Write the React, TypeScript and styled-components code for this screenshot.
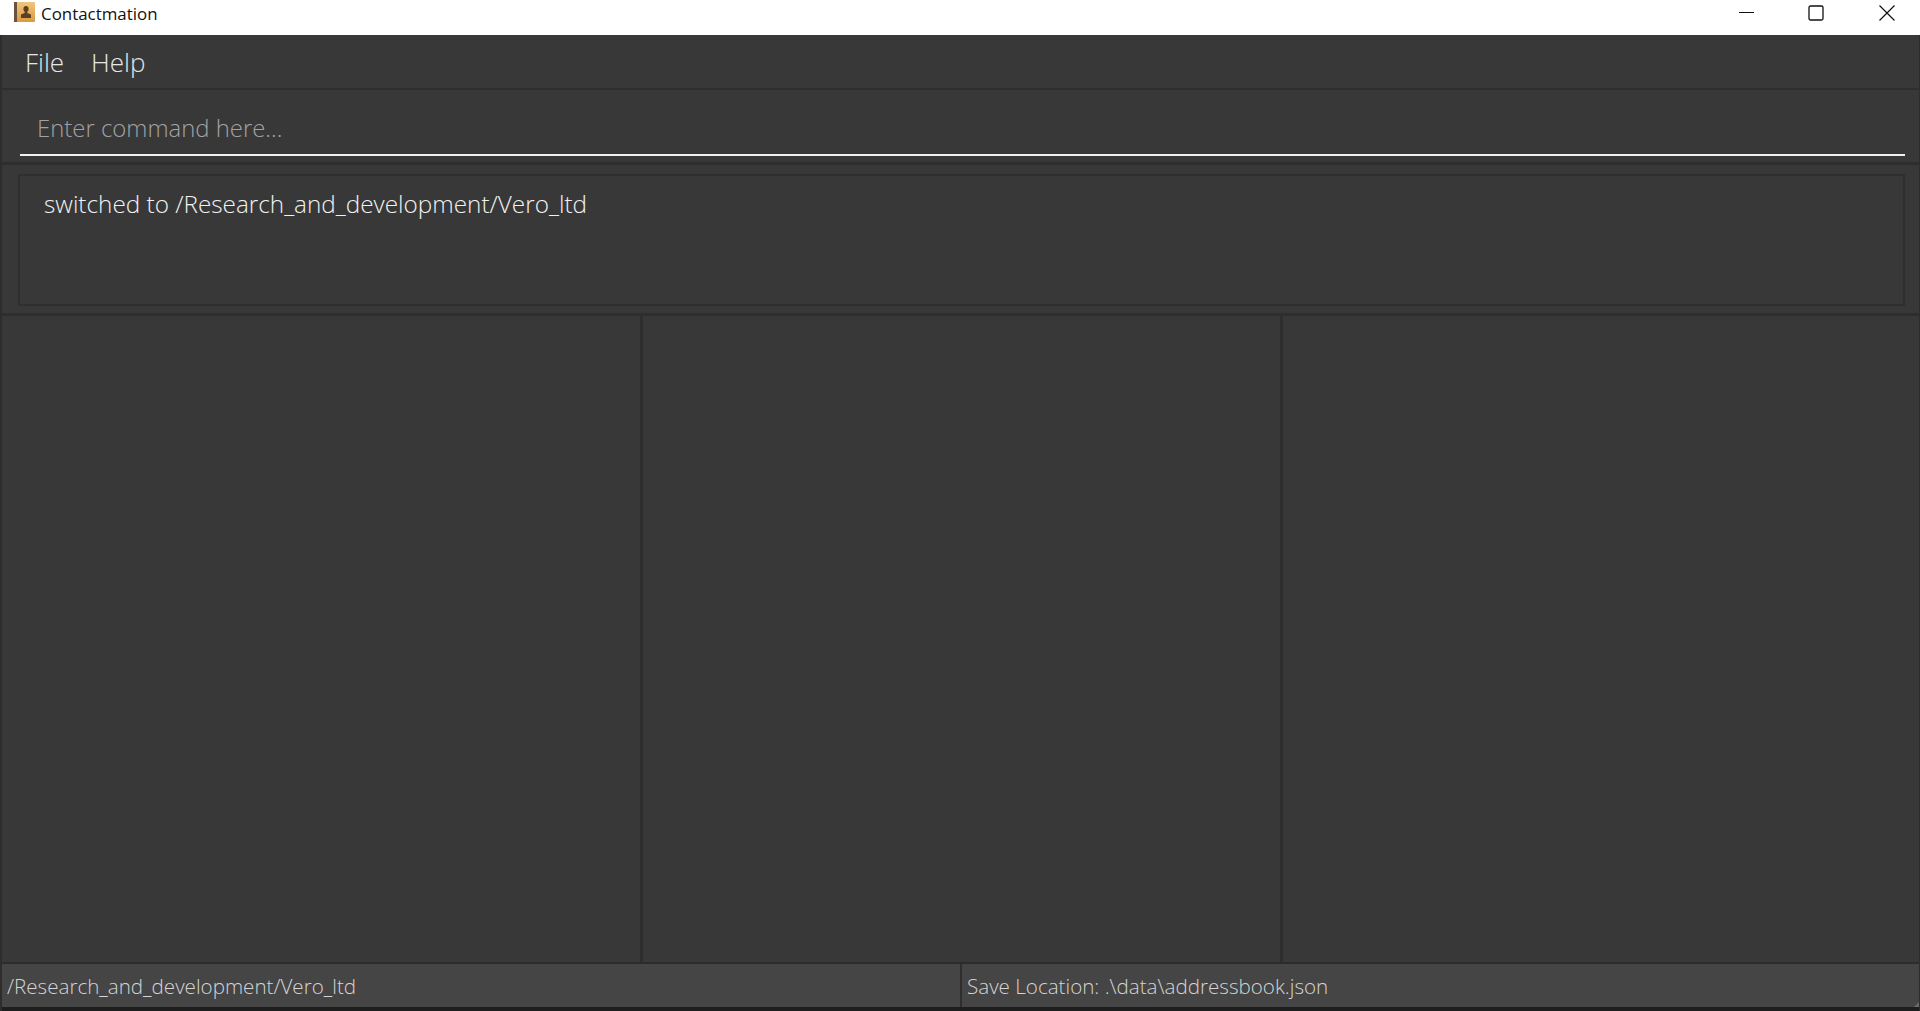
import React from "react";
import styled, { createGlobalStyle } from "styled-components";

const Global = createGlobalStyle`
  html, body { margin: 0; padding: 0; height: 100%; background: #383838; overflow: hidden; }
  #root { height: 100%; }
`;

const Window = styled.div`
  width: 1920px;
  height: 1011px;
  display: flex;
  flex-direction: column;
  background: #383838;
  font-family: "Open Sans", "Liberation Sans", sans-serif;
  font-weight: 300;
  box-sizing: border-box;
  overflow: hidden;
`;

const TitleBar = styled.div`
  height: 35px;
  flex: none;
  background: #fff;
  display: flex;
  align-items: flex-start;
  padding-left: 14px;
  box-sizing: border-box;
`;

const AppTitle = styled.span`
  font-family: "Open Sans", sans-serif;
  font-weight: 400;
  font-size: 16.9px;
  line-height: 27px;
  color: #111;
  margin-left: 6px;
  flex: 1;
`;

const WinButton = styled.button<{ $width: number }>`
  width: ${(p) => p.$width}px;
  height: 25px;
  padding: 0;
  border: none;
  background: transparent;
  display: flex;
  align-items: center;
  justify-content: center;
`;

const Body = styled.div`
  flex: 1;
  min-height: 0;
  display: flex;
  flex-direction: column;
  border-left: 2px solid #2d2d2d;
  border-right: 1px solid #2d2d2d;
`;

const MenuBar = styled.div`
  height: 53px;
  flex: none;
  display: flex;
  align-items: center;
  gap: 27px;
  padding-left: 23px;
  font-size: 26px;
  color: #e6e6e6;
  border-bottom: 2px solid #2e2e2e;
`;

const CommandBox = styled.div`
  height: 75px;
  flex: none;
  box-sizing: border-box;
  padding: 0 14px 6px 18px;
  display: flex;
  border-bottom: 3px solid #2e2e2e;
`;

const CommandField = styled.div`
  flex: 1;
  border-bottom: 2px solid #f0f0f0;
  display: flex;
  align-items: center;
  padding-left: 17px;
  padding-top: 10px;
  font-size: 23.9px;
  color: #a2a2a2;
`;

const ResultBox = styled.div`
  height: 151px;
  flex: none;
  box-sizing: border-box;
  padding: 9px 14px 7px 16px;
  display: flex;
  border-bottom: 3px solid #2e2e2e;
`;

const ResultField = styled.div`
  flex: 1;
  border: 2px solid #2f2f2f;
  padding: 11px 24px;
  font-size: 24.3px;
  line-height: 34px;
  color: #f2f2f2;
`;

const Columns = styled.div`
  flex: 1;
  min-height: 0;
  display: grid;
  grid-template-columns: 641px 640px 1fr;
`;

const Column = styled.div<{ $divider?: boolean }>`
  border-right: ${(p) => (p.$divider ? "3px solid #2e2e2e" : "none")};
`;

const StatusBar = styled.div`
  height: 45px;
  flex: none;
  display: grid;
  grid-template-columns: 960px 1fr;
  background: #454545;
  border-top: 2px solid #2c2c2c;
  box-sizing: border-box;
  position: relative;
  &::after {
    content: "";
    position: absolute;
    right: 0;
    bottom: 0;
    border-style: solid;
    border-width: 0 0 5px 5px;
    border-color: transparent transparent #6a6a6a transparent;
  }
`;

const StatusCell = styled.div<{ $divider?: boolean }>`
  display: flex;
  align-items: center;
  padding-top: 1px;
  font-size: 20.6px;
  color: #d4d4d4;
  padding-left: 5px;
  border-right: ${(p) => (p.$divider ? "2px solid #2e2e2e" : "none")};
`;

const BottomEdge = styled.div`
  height: 4px;
  flex: none;
  background: #1e1e1e;
`;

const IconSvg = styled.svg`
  flex: none;
  margin-top: 2px;
`;

const AppIcon = () => (
  <IconSvg width="21" height="20" viewBox="0 0 21 20">
    <defs>
      <linearGradient id="cover" x1="0" y1="0" x2="0" y2="1">
        <stop offset="0" stopColor="#f0c67e" />
        <stop offset="1" stopColor="#d99a40" />
      </linearGradient>
    </defs>
    <rect x="0" y="0" width="21" height="20" rx="1" fill="url(#cover)" />
    <rect x="0" y="0" width="3" height="20" fill="#6b5240" />
    <path d="M12 4c1.700 0 2.600 1.300 2.600 3 0 1.200-.6 2.300-1.300 2.800v1.100l3.700 1.700V16H7v-3.400l3.700-1.700V9.800c-.7-.5-1.300-1.600-1.300-2.800 0-1.700.9-3 2.600-3z" fill="#5b4022" />
  </IconSvg>
);

const MinIcon = () => (
  <svg width="16" height="2" viewBox="0 0 16 2"><rect width="15" height="1" fill="#111" /></svg>
);
const MaxIcon = () => (
  <svg width="16" height="16" viewBox="0 0 16 16"><rect x="1" y="1" width="14" height="14" rx="1.5" fill="none" stroke="#111" strokeWidth="1.3" /></svg>
);
const CloseIcon = () => (
  <svg width="16" height="16" viewBox="0 0 16 16"><path d="M.5.5l15 15M15.500.5l-15 15" stroke="#111" strokeWidth="1.2" fill="none" /></svg>
);

export default function App() {
  return (
    <Window>
      <Global />
      <TitleBar>
        <AppIcon />
        <AppTitle>Contactmation</AppTitle>
        <WinButton $width={63} aria-label="Minimize"><MinIcon /></WinButton>
        <WinButton $width={75} aria-label="Maximize"><MaxIcon /></WinButton>
        <WinButton $width={67} aria-label="Close"><CloseIcon /></WinButton>
      </TitleBar>
      <Body>
        <MenuBar>
          <span>File</span>
          <span>Help</span>
        </MenuBar>
        <CommandBox>
          <CommandField>Enter command here...</CommandField>
        </CommandBox>
        <ResultBox>
          <ResultField>switched to /Research_and_development/Vero_ltd</ResultField>
        </ResultBox>
        <Columns>
          <Column $divider />
          <Column $divider />
          <Column />
        </Columns>
        <StatusBar>
          <StatusCell $divider>/Research_and_development/Vero_ltd</StatusCell>
          <StatusCell>Save Location: .\data\addressbook.json</StatusCell>
        </StatusBar>
        <BottomEdge />
      </Body>
    </Window>
  );
}
